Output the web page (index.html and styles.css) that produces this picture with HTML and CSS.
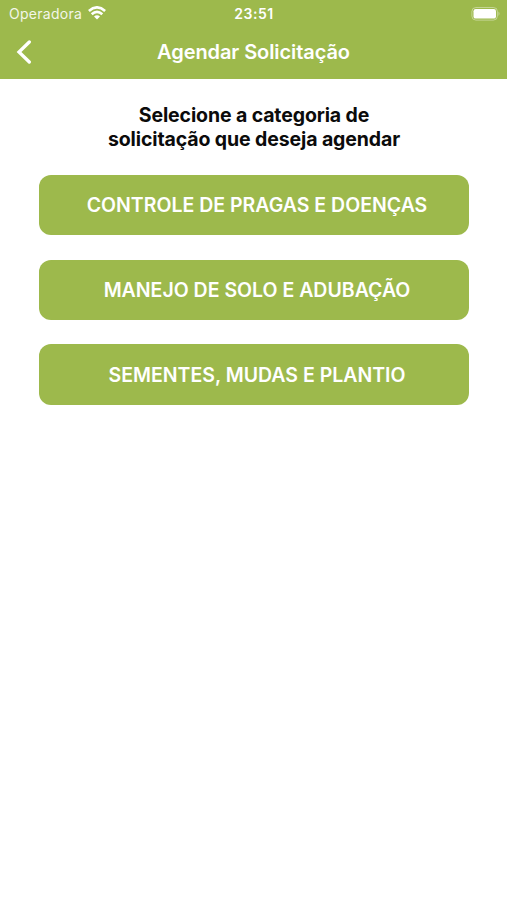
FILE: index.html
```html
<!DOCTYPE html>
<html lang="pt-BR">
<head>
<meta charset="utf-8">
<title>Agendar Solicitação</title>
<link rel="stylesheet" href="styles.css">
</head>
<body>
<header class="header">
  <div class="status">
    <div class="carrier"><span class="carrier-name">Operadora</span>
      <svg class="wifi" viewBox="0 0 18 14" width="18" height="14"><path d="M.9 5Q9-2.300 17.100 5M3.700 8.300Q9 3.300 14.300 8.300" fill="none" stroke="#fff" stroke-width="2.600"/><path d="M6 10.500Q9 8 12 10.500L9 13.500Z" fill="#fff"/></svg>
    </div>
    <span class="time">23:51</span>
    <svg class="battery" viewBox="0 0 30 14" width="30" height="14"><rect x=".9" y=".5" width="25.500" height="12.600" rx="4" fill="none" stroke="#fff" stroke-opacity=".4"/><rect x="2.500" y="2" width="22.500" height="9.600" rx="2.200" fill="#fff"/><path d="M27.500 4.600Q29.500 6.800 27.500 9Z" fill="#fff" fill-opacity=".45"/></svg>
  </div>
  <nav class="nav">
    <svg class="back" viewBox="0 0 16 24" width="16" height="24"><path d="M13.300 2L3 12L13.300 22" fill="none" stroke="#fff" stroke-width="3.300" stroke-linecap="round"/></svg>
    <h1 class="title">Agendar Solicitação</h1>
  </nav>
</header>
<main class="main">
  <h2 class="prompt">Selecione a categoria de<br>solicitação que deseja agendar</h2>
  <div class="options">
    <button class="option">CONTROLE DE PRAGAS E DOENÇAS</button>
    <button class="option">MANEJO DE SOLO E ADUBAÇÃO</button>
    <button class="option">SEMENTES, MUDAS E PLANTIO</button>
  </div>
</main>
</body>
</html>
```
FILE: styles.css
```css
* { box-sizing: border-box; }
body { margin: 0; min-height: 900px; background: #fff; font-family: Inter, "Liberation Sans", sans-serif; }
.header { height: 79.300px; background: #9db94c; color: #fff; }
.status { height: 27px; display: grid; grid-template-columns: 1fr auto 1fr; align-items: center; padding: 0 6px 0 9px; }
.carrier { display: flex; align-items: center; gap: 6px; font-size: 14px; letter-spacing: .28px; }
.wifi { position: relative; top: -1px; }
.carrier-name { opacity: .88; }
.time { font-size: 14px; font-weight: 600; letter-spacing: .5px; margin-right: 2px; }
.battery { justify-self: end; }
.nav { height: 50px; display: grid; grid-template-columns: 40px 1fr 40px; align-items: center; }
.back { margin-left: 16px; }
.title { margin: 0; text-align: center; font-size: 20px; font-weight: 600; letter-spacing: -.08px; }
.main { padding: 25px 38px 0 39px; }
.prompt { margin: 0; text-align: center; font-size: 19.500px; line-height: 23.300px; font-weight: 700; letter-spacing: -.12px; color: #0b0b0b; }
.options { display: grid; gap: 24.500px; margin-top: 24.200px; }
.option { height: 60.200px; border: 0; border-radius: 12px; padding: 0 0 0 6px; background: #9db94c; color: #fff; font: 600 19.500px Inter, "Liberation Sans", sans-serif; letter-spacing: 0; }
```
